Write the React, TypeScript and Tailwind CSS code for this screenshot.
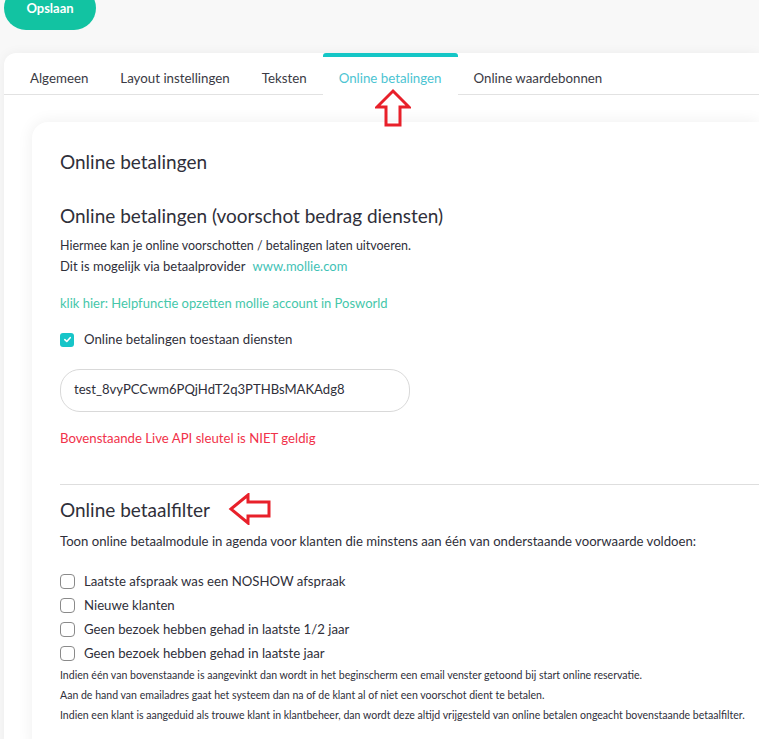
import React from "react";

const tabs = ["Algemeen", "Layout instellingen", "Teksten", "Online betalingen", "Online waardebonnen"];

function UpArrow() {
  return (
    <svg width="36" height="40" viewBox="0 0 36 40" className="absolute left-[375px] top-[88px]">
      <path d="M18 3 L34 19 L25 19 L25 37 L11 37 L11 19 L2 19 Z" fill="none" stroke="#e8202a" strokeWidth="3" strokeLinejoin="miter" />
    </svg>
  );
}

function LeftArrow() {
  return (
    <svg width="44" height="32" viewBox="0 0 44 32" className="absolute left-[228px] top-[493px]">
      <path d="M3 16 L20 2 L20 9 L41 9 L41 23 L20 23 L20 30 Z" fill="none" stroke="#e8202a" strokeWidth="3" />
    </svg>
  );
}

function Box({ checked }: { checked?: boolean }) {
  if (checked)
    return (
      <span className="w-[14px] h-[14px] rounded-[3px] bg-[#17c5c8] flex items-center justify-center shrink-0">
        <svg width="9" height="9" viewBox="0 0 10 10">
          <path d="M2 5.2 L4.2 7.2 L8 3" fill="none" stroke="white" strokeWidth="1.8" strokeLinecap="round" strokeLinejoin="round" />
        </svg>
      </span>
    );
  return <span className="w-[15px] h-[15px] rounded-[4px] border border-[#8a8a8a] bg-white shrink-0" />;
}

export default function App() {
  return (
    <div className="relative min-h-screen bg-[#f8f8f8] text-[#2f2f3a] overflow-hidden" style={{ fontFamily: "Lato, 'Noto Sans', sans-serif" }}>
      <div className="pl-1">
        <button className="block -mt-[14px] h-[44px] w-[92px] rounded-full bg-[#12c3a2] text-white text-[13px] font-bold pt-[1px]">Opslaan</button>
      </div>
      <div className="ml-1 mt-[23px] bg-white rounded-tl-xl shadow-[0_0_12px_rgba(0,0,0,0.05)]">
        <div className="flex h-[42px] border-b border-[#e2e2e2] pl-[10px]">
          {tabs.map((t, i) => {
            const active = i === 3;
            return (
              <div
                key={t}
                className={
                  active
                    ? "px-4 flex items-center text-[13.3px] text-[#4cc4d2] border-t-4 border-[#14c6c6] rounded-t-[3px] bg-white -mb-px pt-[6px]"
                    : "px-4 flex items-center text-[13.3px] text-[#3a3a44] pt-[10px]"
                }
              >
                {t}
              </div>
            );
          })}
        </div>
        <div className="pl-7 pt-[27px]">
          <div className="bg-white rounded-tl-2xl shadow-[0_0_16px_rgba(0,0,0,0.07)] pl-7 pt-[26px] pb-6">
            <h1 className="text-[19px] leading-[28px]">Online betalingen</h1>
            <h2 className="text-[19px] leading-[28px] mt-[26px]">Online betalingen (voorschot bedrag diensten)</h2>
            <p className="text-[12.45px] leading-[21px] mt-[5px]">Hiermee kan je online voorschotten / betalingen laten uitvoeren.</p>
            <p className="text-[13px] leading-[21px]">
              Dit is mogelijk via betaalprovider <span className="ml-1 text-[#3fc2b6]">www.mollie.com</span>
            </p>
            <p className="text-[13px] leading-[21px] mt-4 text-[#45c7aa]">klik hier: Helpfunctie opzetten mollie account in Posworld</p>
            <label className="flex items-center gap-[10px] mt-[16px] text-[13.2px]">
              <Box checked />
              Online betalingen toestaan diensten
            </label>
            <div className="mt-[19px] w-[350px] h-[43px] rounded-[20px] border border-[#d9d9d9] flex items-center pl-[13px] text-[13.1px]">
              test_8vyPCCwm6PQjHdT2q3PTHBsMAKAdg8
            </div>
            <p className="text-[13.2px] mt-[17px] text-[#f1324a]">Bovenstaande Live API sleutel is NIET geldig</p>
            <div className="border-t border-[#dedede] mt-[35px]" />
            <h2 className="text-[19px] leading-[28px] mt-[11px]">Online betaalfilter</h2>
            <p className="text-[13.15px] leading-[20px] mt-[7px]">
              Toon online betaalmodule in agenda voor klanten die minstens aan één van onderstaande voorwaarde voldoen:
            </p>
            <div className="mt-[22px] flex flex-col gap-[6px] text-[13.2px]">
              {[
                "Laatste afspraak was een NOSHOW afspraak",
                "Nieuwe klanten",
                "Geen bezoek hebben gehad in laatste 1/2 jaar",
                "Geen bezoek hebben gehad in laatste jaar",
              ].map((l) => (
                <label key={l} className="flex items-center gap-[9px] h-[18px]">
                  <Box />
                  {l}
                </label>
              ))}
            </div>
            <div className="mt-[2px] text-[10.55px] leading-[20px]">
              <p>Indien één van bovenstaande is aangevinkt dan wordt in het beginscherm een email venster getoond bij start online reservatie.</p>
              <p>Aan de hand van emailadres gaat het systeem dan na of de klant al of niet een voorschot dient te betalen.</p>
              <p>Indien een klant is aangeduid als trouwe klant in klantbeheer, dan wordt deze altijd vrijgesteld van online betalen ongeacht bovenstaande betaalfilter.</p>
            </div>
          </div>
        </div>
      </div>
      <UpArrow />
      <LeftArrow />
    </div>
  );
}
